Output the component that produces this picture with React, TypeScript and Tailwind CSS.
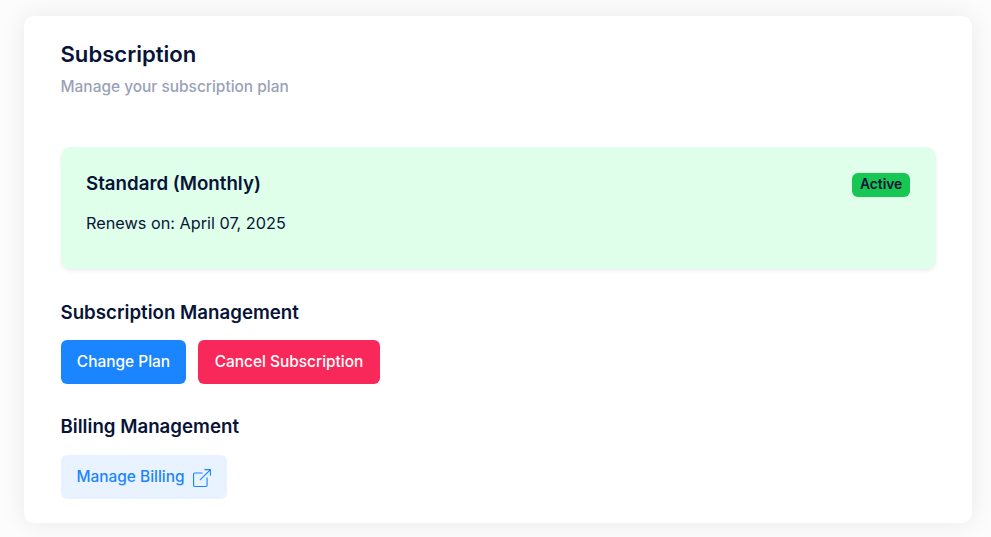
type SectionTitleProps = {
  children: string;
};

const SectionTitle = ({ children }: SectionTitleProps) => (
  <h3 className="text-[18.69px] leading-[22px] font-semibold">{children}</h3>
);

const ExternalIcon = () => (
  <svg className="w-[18px] h-[18px] ml-2 mt-0.5" viewBox="0 0 16 16" fill="currentColor">
    <path
      fillRule="evenodd"
      d="M8.636 3.5a.5.5 0 0 0-.5-.5H1.5A1.5 1.5 0 0 0 0 4.5v10A1.5 1.5 0 0 0 1.5 16h10a1.5 1.5 0 0 0 1.5-1.5V7.864a.5.5 0 0 0-1 0V14.5a.5.5 0 0 1-.5.5h-10a.5.5 0 0 1-.5-.5v-10a.5.5 0 0 1 .5-.5h6.636a.5.5 0 0 0 .5-.5"
    />
    <path
      fillRule="evenodd"
      d="M16 .5a.5.5 0 0 0-.5-.5h-5a.5.5 0 0 0 0 1h3.793L6.146 9.146a.5.5 0 1 0 .708.708L15 1.707V5.5a.5.5 0 0 0 1 0z"
    />
  </svg>
);

const App = () => {
  return (
    <main className="h-[537px] overflow-hidden bg-[#fcfcfc] pt-4 pl-6 pr-[19px] font-[Inter,sans-serif] text-[#071437]">
      <div className="h-[507px] bg-white rounded-[10px] px-[36.5px] pt-[26px] shadow-[0_0_26px_rgba(0,0,0,0.08)]">
        <h2 className="text-[22.1px] leading-6 font-semibold">Subscription</h2>
        <p className="mt-[9px] text-[15.44px] leading-6 font-medium text-[#99a1b7]">
          Manage your subscription plan
        </p>

        <section className="mt-12 h-[121.5px] rounded-[10px] bg-[#dfffea] px-[25.5px] pt-[26px] flex justify-between items-start shadow-[0_2px_4px_rgba(0,0,0,0.075)]">
          <div>
            <SectionTitle>Standard (Monthly)</SectionTitle>
            <p className="mt-4 text-[16.25px] leading-6">Renews on: April 07, 2025</p>
          </div>
          <span className="h-6 px-[7.75px] rounded-md bg-[#17c653] text-[13.81px] leading-[23px] font-semibold">
            Active
          </span>
        </section>

        <section className="mt-[33.5px]">
          <SectionTitle>Subscription Management</SectionTitle>
          <div className="mt-4 flex gap-3">
            <button className="w-[125px] h-11 pl-px rounded-md bg-[#1b84ff] text-white text-[15.44px] font-medium">
              Change Plan
            </button>
            <button className="w-[182px] h-11 pl-px rounded-md bg-[#f8285a] text-white text-[15.44px] font-medium">
              Cancel Subscription
            </button>
          </div>
        </section>

        <section className="mt-8">
          <SectionTitle>Billing Management</SectionTitle>
          <button className="mt-[17px] w-[166px] h-11 pb-px rounded-md bg-[#e9f3ff] text-[#1b84ff] text-[15.44px] font-medium flex items-center justify-center">
            Manage Billing
            <ExternalIcon />
          </button>
        </section>
      </div>
    </main>
  );
};

export default App;
